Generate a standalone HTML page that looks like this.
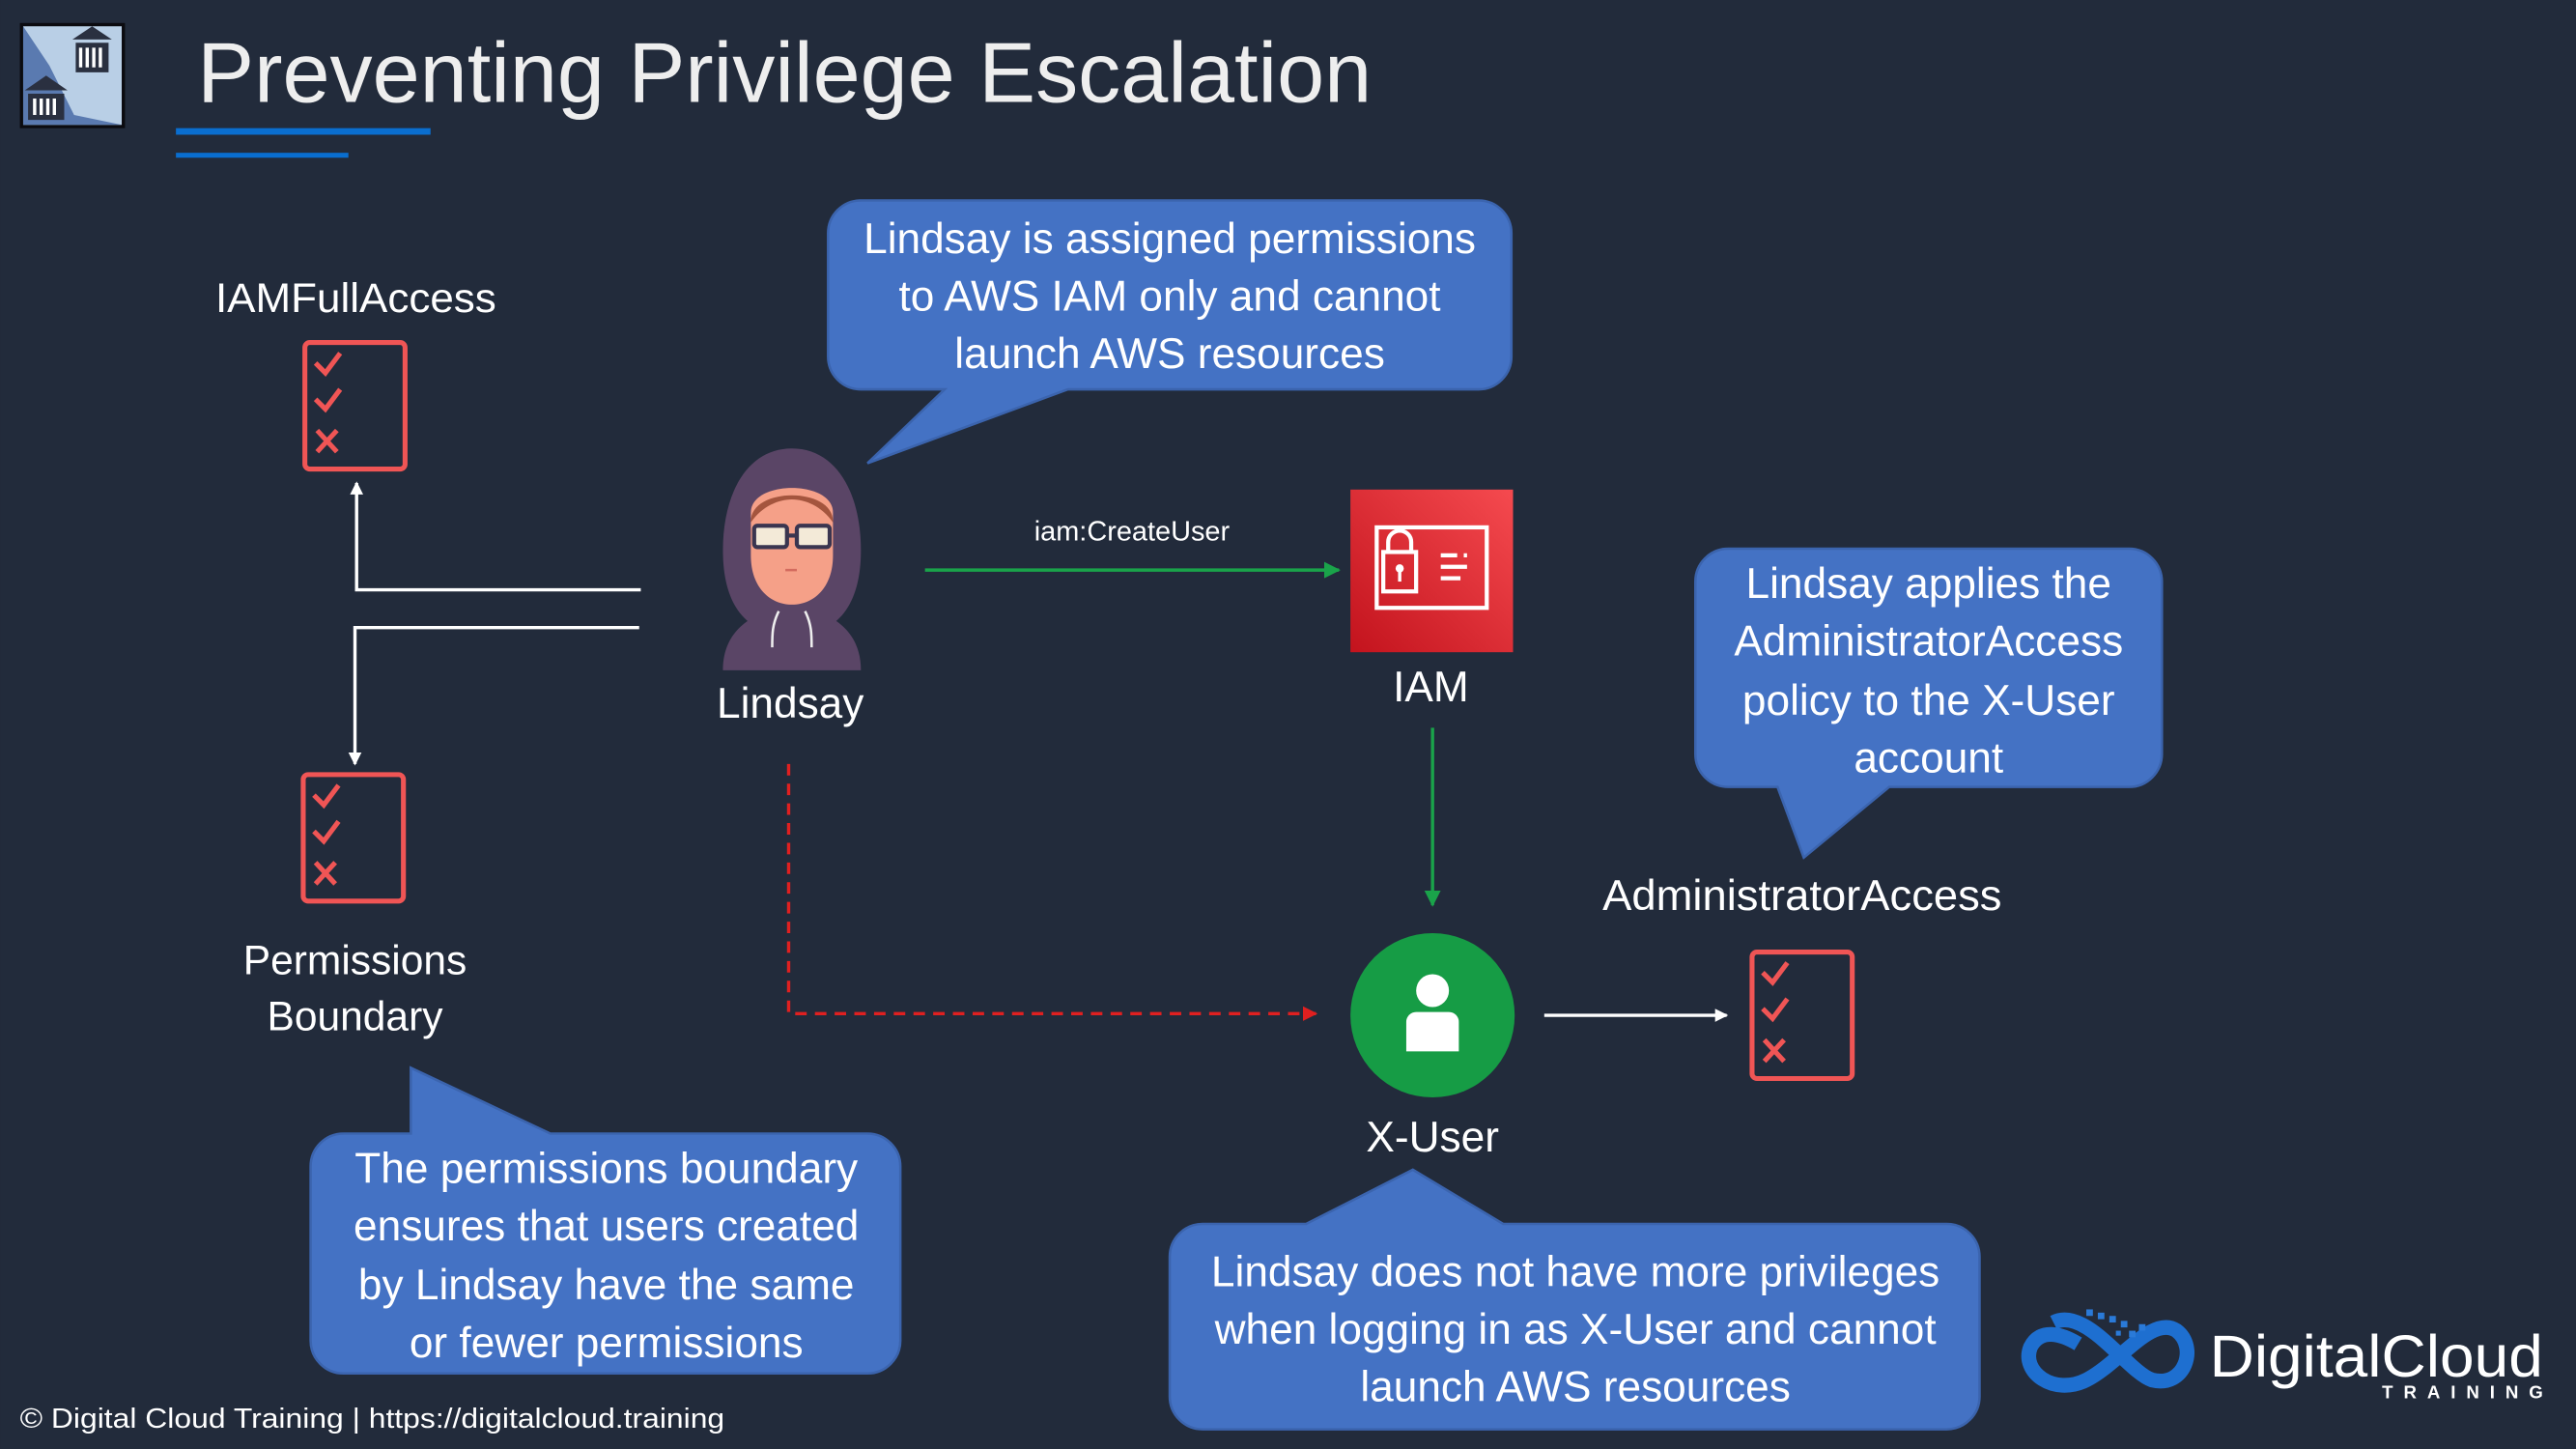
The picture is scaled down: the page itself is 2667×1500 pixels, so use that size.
<!DOCTYPE html>
<html><head><meta charset="utf-8"><style>
html,body{margin:0;padding:0;background:#222b3b;overflow:hidden}
svg{display:block}
text{font-family:"Liberation Sans",sans-serif;fill:#fff}
</style></head><body>
<svg width="2667" height="1500" viewBox="0 0 1568 882" xmlns="http://www.w3.org/2000/svg">
<rect width="1568" height="882" fill="#222b3b"/>
<defs>
<marker id="aw" markerWidth="8" markerHeight="8" refX="7" refY="4" orient="auto" markerUnits="userSpaceOnUse"><path d="M0,0L8,4L0,8z" fill="#fff"/></marker>
<marker id="ag" markerWidth="10" markerHeight="10" refX="9" refY="5" orient="auto" markerUnits="userSpaceOnUse"><path d="M0,0L10,5L0,10z" fill="#1aa34a"/></marker>
<marker id="ar" markerWidth="9" markerHeight="9" refX="8" refY="4.5" orient="auto" markerUnits="userSpaceOnUse"><path d="M0,0L9,4.5L0,9z" fill="#e02020"/></marker>
<linearGradient id="iamg" x1="1" y1="0" x2="0" y2="1"><stop offset="0" stop-color="#f54a4f"/><stop offset="1" stop-color="#c3131d"/></linearGradient>
<g id="doc">
<rect x="1.5" y="1.5" width="61" height="77" rx="3" fill="none" stroke="#f05555" stroke-width="3"/>
<path d="M8,14l6,6l9,-12M8,36l6,6l9,-12M9,55l12,13M21,55l-12,13" fill="none" stroke="#f05555" stroke-width="3"/>
</g>
</defs>

<!-- header icon -->
<rect x="12" y="14" width="64" height="64" fill="#0b0b10"/>
<rect x="14" y="16" width="60" height="60" fill="#b9cfe6"/>
<path d="M14,16 L30,40 L45,70 L74,76 L14,76z" fill="#5a7ab0"/>
<path d="M44,24l12,-8l12,8z M46,26h20v18h-20z M15,55l13,-9l13,9z M17,57h22v16h-22z" fill="#2a3040"/>
<path d="M49,29v12M53,29v12M57,29v12M61,29v12M21,60v10M25,60v10M29,60v10M33,60v10" stroke="#fff" stroke-width="2"/>

<text x="120" y="62" font-size="52" fill="#eeeeee" style="fill:#eeeeee" textLength="715" lengthAdjust="spacingAndGlyphs">Preventing Privilege Escalation</text>
<rect x="107" y="78" width="155" height="4" fill="#0a6ecf"/>
<rect x="107" y="93" width="105" height="3" fill="#0a6ecf"/>

<!-- left -->
<text x="131" y="190" font-size="25" textLength="171" lengthAdjust="spacingAndGlyphs">IAMFullAccess</text>
<use href="#doc" x="184" y="207"/>
<path d="M390,359H217V294" fill="none" stroke="#fff" stroke-width="2" marker-end="url(#aw)"/>
<path d="M389,382H216V465" fill="none" stroke="#fff" stroke-width="2" marker-end="url(#aw)"/>
<use href="#doc" x="183" y="470"/>
<text x="216" y="593" font-size="25" text-anchor="middle">Permissions</text>
<text x="216" y="627" font-size="25" text-anchor="middle">Boundary</text>

<!-- bubbles -->
<g fill="#4472c4" stroke="#3b64ae" stroke-width="1.5">
<path d="M209,690 H250 V650 L335,690 H528 a20,20 0 0 1 20,20 V816 a20,20 0 0 1 -20,20 H209 a20,20 0 0 1 -20,-20 V710 a20,20 0 0 1 20,-20z"/>
<path d="M524,122 H900 a20,20 0 0 1 20,20 V217 a20,20 0 0 1 -20,20 H650 L528,282 L575,237 H524 a20,20 0 0 1 -20,-20 V142 a20,20 0 0 1 20,-20z"/>
<path d="M1052,334 H1296 a20,20 0 0 1 20,20 V459 a20,20 0 0 1 -20,20 H1150 L1098,522 L1082,479 H1052 a20,20 0 0 1 -20,-20 V354 a20,20 0 0 1 20,-20z"/>
<path d="M732,745 H795 L860,712 L915,745 H1185 a20,20 0 0 1 20,20 V850 a20,20 0 0 1 -20,20 H732 a20,20 0 0 1 -20,-20 V765 a20,20 0 0 1 20,-20z"/>
</g>
<g font-size="26" text-anchor="middle">
<text x="369" y="720">The permissions boundary</text>
<text x="369" y="755">ensures that users created</text>
<text x="369" y="791">by Lindsay have the same</text>
<text x="369" y="826">or fewer permissions</text>
<text x="712" y="154">Lindsay is assigned permissions</text>
<text x="712" y="189">to AWS IAM only and cannot</text>
<text x="712" y="224">launch AWS resources</text>
<text x="1174" y="364">Lindsay applies the</text>
<text x="1174" y="399">AdministratorAccess</text>
<text x="1174" y="435">policy to the X-User</text>
<text x="1174" y="470">account</text>
<text x="959" y="783">Lindsay does not have more privileges</text>
<text x="959" y="818">when logging in as X-User and cannot</text>
<text x="959" y="853">launch AWS resources</text>
</g>

<!-- Lindsay avatar -->
<path d="M482,273 C455,273 440,300 440,335 C440,360 448,372 455,378 C445,385 440,395 440,408 H524 C524,395 519,385 509,378 C516,372 524,360 524,335 C524,300 509,273 482,273z" fill="#5a4566"/>
<path d="M457,312 C457,292 507,292 507,312 V338 C507,358 495,368 482,368 C469,368 457,358 457,338z" fill="#f5a088"/>
<path d="M457,318 C456,296 508,296 507,318 C500,308 490,304 482,304 C474,304 464,308 457,318z" fill="#a4553e"/>
<rect x="459" y="320" width="20" height="13" rx="2" fill="#f3ead8" stroke="#3a3550" stroke-width="2.5"/>
<rect x="485" y="320" width="20" height="13" rx="2" fill="#f3ead8" stroke="#3a3550" stroke-width="2.5"/>
<path d="M479,326h6" stroke="#3a3550" stroke-width="2.5"/>
<path d="M478,347h7" stroke="#d36b5e" stroke-width="1.5"/>
<path d="M474,372c-4,8 -4,14 -4,22M490,372c4,8 4,14 4,22" stroke="#eee" stroke-width="1.5" fill="none"/>
<text x="481" y="437" font-size="26" text-anchor="middle">Lindsay</text>

<path d="M563,347H815" stroke="#1aa34a" stroke-width="2" marker-end="url(#ag)"/>
<text x="689" y="329" font-size="17" text-anchor="middle">iam:CreateUser</text>

<!-- IAM -->
<rect x="822" y="298" width="99" height="99" fill="url(#iamg)"/>
<rect x="838" y="321" width="67" height="49" fill="none" stroke="#fff" stroke-width="2.5"/>
<path d="M845,336v-6a7,7 0 0 1 14,0v6" fill="none" stroke="#fff" stroke-width="2.5"/>
<rect x="842" y="336" width="20" height="24" fill="none" stroke="#fff" stroke-width="2.5"/>
<circle cx="852" cy="346" r="2.5" fill="#fff"/><path d="M852,348v6" stroke="#fff" stroke-width="2"/>
<path d="M877,338h10M891,338h2M877,345h16M877,352h12" stroke="#fff" stroke-width="2.5"/>
<text x="871" y="427" font-size="26" text-anchor="middle">IAM</text>

<path d="M872,443V551" stroke="#1aa34a" stroke-width="2" marker-end="url(#ag)"/>
<path d="M480,465V617H801" fill="none" stroke="#e02020" stroke-width="2" stroke-dasharray="7,5" marker-end="url(#ar)"/>

<!-- X-User -->
<circle cx="872" cy="618" r="50" fill="#169c45"/>
<circle cx="872" cy="603" r="10" fill="#fff"/>
<path d="M856,640v-18a6,6 0 0 1 6,-6h20a6,6 0 0 1 6,6v18z" fill="#fff"/>
<text x="872" y="701" font-size="26" text-anchor="middle">X-User</text>
<path d="M940,618H1051" stroke="#fff" stroke-width="2" marker-end="url(#aw)"/>
<text x="1097" y="554" font-size="26" text-anchor="middle" textLength="243" lengthAdjust="spacingAndGlyphs">AdministratorAccess</text>
<use href="#doc" x="1065" y="578"/>

<!-- footer -->
<text x="12" y="869" font-size="17" textLength="429" lengthAdjust="spacingAndGlyphs">© Digital Cloud Training  | https://digitalcloud.training</text>

<!-- logo -->
<path d="M1250,805 C1270,795 1295,835 1310,840 C1330,845 1338,820 1325,810 C1310,800 1290,830 1270,840 C1250,850 1230,835 1236,820 C1242,808 1255,812 1265,818" fill="none" stroke="#1e6fd0" stroke-width="9"/>
<g fill="#2a7ad8"><rect x="1270" y="797" width="4" height="4"/><rect x="1277" y="799" width="4" height="4"/><rect x="1284" y="801" width="4" height="4"/><rect x="1291" y="804" width="4" height="4"/><rect x="1296" y="810" width="4" height="4"/><rect x="1302" y="806" width="4" height="4"/><rect x="1288" y="810" width="3" height="3"/></g>
<text x="1345" y="838" font-size="36" textLength="203" lengthAdjust="spacingAndGlyphs">DigitalCloud</text>
<text x="1450" y="851" font-size="11" font-weight="bold" textLength="98" lengthAdjust="spacing">TRAINING</text>
</svg>
</body></html>
